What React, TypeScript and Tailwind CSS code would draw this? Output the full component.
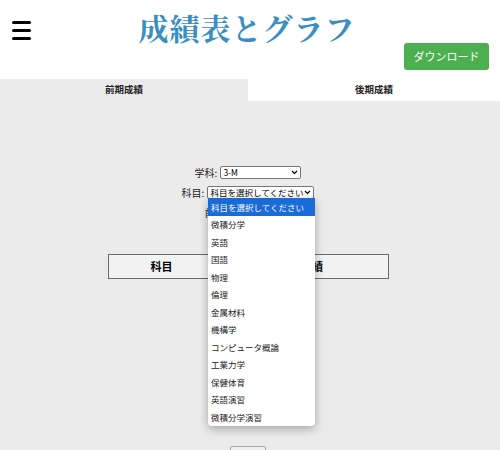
import React from "react";

const JP = "font-['Noto_Sans_CJK_JP','Noto_Sans',sans-serif]";

const subjects = [
    "科目を選択してください",
    "微積分学",
    "英語",
    "国語",
    "物理",
    "倫理",
    "金属材料",
    "機構学",
    "コンピュータ概論",
    "工業力学",
    "保健体育",
    "英語演習",
    "微積分学演習",
];

// 選択ボックス風の表示
function FakeSelect({ value, width }: { value: string; width: string }) {
    return (
        <div className={`${width} h-[13px] bg-white border border-[#767676] rounded-[2px] flex items-center pl-[2px] pr-[2px] text-[8.5px] leading-[11px] text-black`}>
            <span className="flex-1 whitespace-nowrap overflow-hidden">{value}</span>
            <svg width="7" height="5" viewBox="0 0 7 5" className="shrink-0">
                <path d="M1 1 L3.5 3.5 L6 1" fill="none" stroke="#000" strokeWidth="1.2" />
            </svg>
        </div>
    );
}

export default function App() {
    return (
        <div className={`w-[500px] h-[450px] overflow-hidden bg-[#ebebeb] relative ${JP}`}>
            {/* ヘッダー */}
            <header className="bg-white h-[79px] flex flex-col">
                <div className="grid grid-cols-[1fr_auto_1fr] h-[43px]">
                    <div className="pl-[12px] pt-[21px]">
                        <div className="w-[19px] flex flex-col gap-[5px]">
                            <div className="h-[3px] bg-black rounded-full" />
                            <div className="h-[3px] bg-black rounded-full" />
                            <div className="h-[3px] bg-black rounded-full" />
                        </div>
                    </div>
                    <h1 className="mt-[12px] mr-[6px] text-[30px] leading-[30px] font-bold text-[#3a8ec2] tracking-[1px] font-['Noto_Serif_CJK_JP','Noto_Sans_CJK_JP',serif]">
                        成績表とグラフ
                    </h1>
                    <div />
                </div>
                <div className="flex justify-end pr-[11px]">
                    <button className="w-[85px] h-[27px] bg-[#4caf50] rounded-[3px] text-white text-[11px] leading-none">
                        ダウンロード
                    </button>
                </div>
            </header>

            {/* タブ */}
            <div className="flex h-[22px] text-[9.5px] font-semibold text-[#222] leading-none">
                <div className="w-[248px] bg-[#ebebeb] flex items-center justify-center">前期成績</div>
                <div className="flex-1 bg-white flex items-center justify-center">後期成績</div>
            </div>

            {/* メイン */}
            <main className="flex flex-col items-center pr-[4px] pt-[65px] text-[10px] text-[#222]">
                <div className="flex items-center gap-[3px] h-[13px]">
                    <span>学科:</span>
                    <FakeSelect value="3-M" width="w-[81px]" />
                </div>
                <div className="flex items-center gap-[3px] h-[13px] mt-[7px]">
                    <span>科目:</span>
                    <FakeSelect value="科目を選択してください" width="w-[107px]" />
                </div>
                <div className="flex items-center gap-[3px] h-[13px] mt-[7px]">
                    <span>前期/後期:</span>
                    <FakeSelect value="前期" width="w-[37px]" />
                </div>

                <div className="mt-[35px] w-[281px] h-[25px] border border-[#6b6b6b] bg-[#f2f2f2] grid grid-cols-[106px_1fr] text-[11px] font-bold text-black">
                    <div className="flex items-center justify-center">科目</div>
                    <div className="flex items-center justify-center pl-[22px]">成績</div>
                </div>

                <div className="mt-[167px] w-[36px] h-[10px] border border-[#a8a8a8] bg-[#efefef] rounded-[2px]" />
            </main>

            {/* 開いたドロップダウン */}
            <ul className="absolute left-[208px] top-[198px] w-[107px] bg-white rounded-b-[4px] shadow-[0_3px_10px_rgba(0,0,0,0.3)] text-[8.5px] text-[#222] leading-none">
                {subjects.map((s, i) => (
                    <li
                        key={s}
                        className={
                            i === 0
                                ? "h-[17.5px] flex items-center pl-[3px] bg-[#1a6bd8] text-white whitespace-nowrap"
                                : "h-[17.5px] flex items-center pl-[3px] whitespace-nowrap"
                        }
                    >
                        {s}
                    </li>
                ))}
            </ul>
        </div>
    );
}
